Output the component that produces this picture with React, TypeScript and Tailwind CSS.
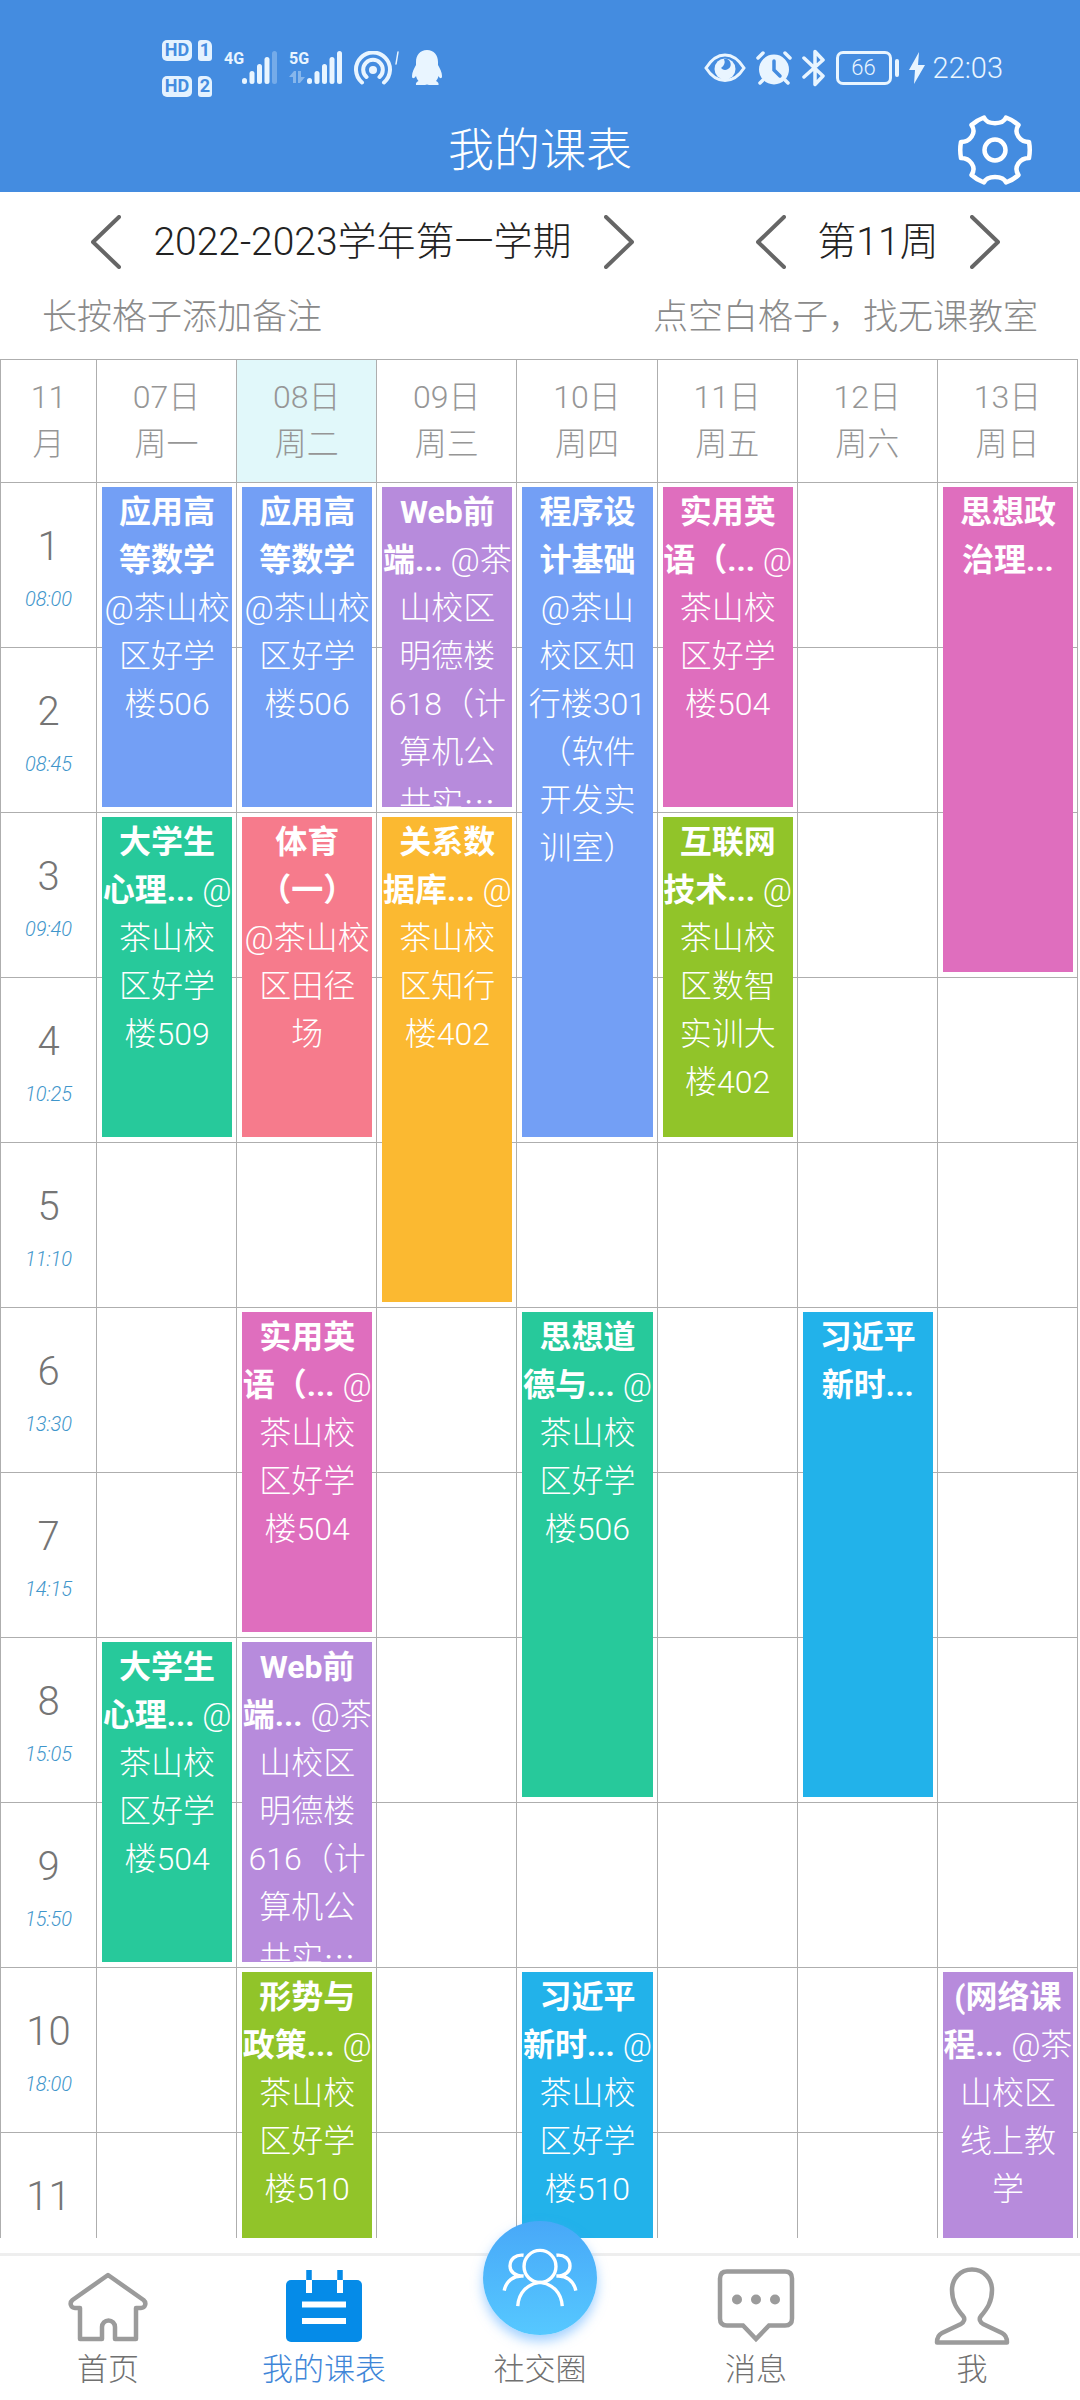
import React from "react";

type Course = { day: number; start: number; span: 2 | 3 | 4; color: string; title: string[]; mixed?: [string, string]; place: string[] };

const BLUE = "bg-[#739ff5]";
const GREEN = "bg-[#27c99b]";
const PURPLE = "bg-[#b78bdc]";
const PINK = "bg-[#df6ebe]";
const LIME = "bg-[#91c429]";
const CORAL = "bg-[#f67b8c]";
const AMBER = "bg-[#fbb931]";
const SKY = "bg-[#22b2ea]";

const SPAN_HEIGHT = { 2: "h-[320px]", 3: "h-[485px]", 4: "h-[650px]" };

const courses: Course[] = [
  { day: 0, start: 1, span: 2, color: BLUE, title: ["应用高", "等数学"], place: ["@茶山校", "区好学", "楼506"] },
  { day: 1, start: 1, span: 2, color: BLUE, title: ["应用高", "等数学"], place: ["@茶山校", "区好学", "楼506"] },
  { day: 2, start: 1, span: 2, color: PURPLE, title: ["Web前"], mixed: ["端...", "@茶"], place: ["山校区", "明德楼", "618（计", "算机公", "共实…"] },
  { day: 3, start: 1, span: 4, color: BLUE, title: ["程序设", "计基础"], place: ["@茶山", "校区知", "行楼301", "（软件", "开发实", "训室）"] },
  { day: 4, start: 1, span: 2, color: PINK, title: ["实用英"], mixed: ["语（...", "@"], place: ["茶山校", "区好学", "楼504"] },
  { day: 6, start: 1, span: 3, color: PINK, title: ["思想政", "治理..."], place: [] },
  { day: 0, start: 3, span: 2, color: GREEN, title: ["大学生"], mixed: ["心理...", "@"], place: ["茶山校", "区好学", "楼509"] },
  { day: 1, start: 3, span: 2, color: CORAL, title: ["体育", "（一）"], place: ["@茶山校", "区田径", "场"] },
  { day: 2, start: 3, span: 3, color: AMBER, title: ["关系数"], mixed: ["据库...", "@"], place: ["茶山校", "区知行", "楼402"] },
  { day: 4, start: 3, span: 2, color: LIME, title: ["互联网"], mixed: ["技术...", "@"], place: ["茶山校", "区数智", "实训大", "楼402"] },
  { day: 1, start: 6, span: 2, color: PINK, title: ["实用英"], mixed: ["语（...", "@"], place: ["茶山校", "区好学", "楼504"] },
  { day: 3, start: 6, span: 3, color: GREEN, title: ["思想道"], mixed: ["德与...", "@"], place: ["茶山校", "区好学", "楼506"] },
  { day: 5, start: 6, span: 3, color: SKY, title: ["习近平", "新时..."], place: [] },
  { day: 0, start: 8, span: 2, color: GREEN, title: ["大学生"], mixed: ["心理...", "@"], place: ["茶山校", "区好学", "楼504"] },
  { day: 1, start: 8, span: 2, color: PURPLE, title: ["Web前"], mixed: ["端...", "@茶"], place: ["山校区", "明德楼", "616（计", "算机公", "共实…"] },
  { day: 1, start: 10, span: 2, color: LIME, title: ["形势与"], mixed: ["政策...", "@"], place: ["茶山校", "区好学", "楼510"] },
  { day: 3, start: 10, span: 2, color: SKY, title: ["习近平"], mixed: ["新时...", "@"], place: ["茶山校", "区好学", "楼510"] },
  { day: 6, start: 10, span: 2, color: PURPLE, title: ["(网络课"], mixed: ["程...", "@茶"], place: ["山校区", "线上教", "学"] },
];

const days = [
  ["07日", "周一"],
  ["08日", "周二"],
  ["09日", "周三"],
  ["10日", "周四"],
  ["11日", "周五"],
  ["12日", "周六"],
  ["13日", "周日"],
];

const times = ["08:00", "08:45", "09:40", "10:25", "11:10", "13:30", "14:15", "15:05", "15:50", "18:00", ""];

function HdBadge({ sim }: { sim: string }) {
  return (
    <div className="flex gap-1.5">
      <span className="flex h-[21px] w-[30px] items-center justify-center rounded-[5px] bg-[#e4f2ff] text-lg font-bold leading-none text-[#448ce0]">HD</span>
      <span className="flex h-[21px] w-[14px] items-center justify-center rounded-[3px] rounded-tr-[6px] bg-[#e4f2ff] text-lg font-bold leading-none text-[#448ce0]">{sim}</span>
    </div>
  );
}

function Signal({ label, full }: { label: string; full?: boolean }) {
  return (
    <div className="flex h-[34px] items-start">
      <div className="w-[18px]">
        <div className="text-base font-bold leading-none">{label}</div>
        {full && (
          <svg width="16" height="13" viewBox="0 0 16 13" className="mt-1 opacity-40" fill="currentColor">
            <path d="M0 6 5 0h2v12H4V6zM9 0h3v6h4l-5 6H9z" />
          </svg>
        )}
      </div>
      <svg width="35" height="34" viewBox="0 0 35 34" fill="currentColor">
        <rect x="0" y="27" width="5" height="6" rx="2.5" />
        <rect x="7.5" y="20" width="5" height="13" rx="2.5" />
        <rect x="15" y="13" width="5" height="20" rx="2.5" />
        <rect x="22.5" y="6" width="5" height="27" rx="2.5" />
        <rect x="30" y="0" width="5" height="33" rx="2.5" opacity={full ? 1 : 0.3} />
      </svg>
    </div>
  );
}

function StatusBar() {
  return (
    <div className="flex h-[108px] items-center justify-between pl-[162px] pr-[77px] pt-7 text-[#e9f5ff]">
      <div className="flex items-center gap-3">
        <div className="flex flex-col gap-[15px]">
          <HdBadge sim="1" />
          <HdBadge sim="2" />
        </div>
        <Signal label="4G" />
        <Signal label="5G" full />
        <svg width="46" height="34" viewBox="0 0 46 34" fill="none" stroke="currentColor" strokeWidth="4" strokeLinecap="round">
          <path d="M8 31.500A17 17 0 1 1 30 31.500M12.500 26A9.800 9.800 0 1 1 25.500 26" />
          <circle cx="19" cy="19" r="4" fill="currentColor" stroke="none" />
          <path d="M44 1l-2 12" strokeWidth="1.500" />
        </svg>
        <svg width="30" height="36" viewBox="0 0 30 36" fill="currentColor">
          <path d="M15 0c7 0 11 5 11 12v3c2 4 4 7 4 11 0 3-2 3-3.500 0-.500 2-1.500 4-2.500 5 2 1 3 2 2.500 4H17q-2-1-4 0H4c-.500-2 .500-3 2.500-4-1-1-2-3-2.500-5C2 29 0 29 0 26c0-4 2-7 4-11v-3C4 5 8 0 15 0z" />
        </svg>
      </div>
      <div className="flex items-center gap-2.5">
        <svg width="42" height="30" viewBox="0 0 42 30">
          <path d="M2 15C7 7 14 2 21 2s14 5 19 13c-5 8-12 12.500-19 12.500S7 23 2 15z" fill="none" stroke="currentColor" strokeWidth="3" />
          <circle cx="21" cy="16" r="10.500" fill="currentColor" />
          <path d="M18 5a5.500 5.500 0 1 1-3 9 7 7 0 0 0 3-9z" fill="#448ce0" transform="translate(2 1)" />
        </svg>
        <svg width="36" height="34" viewBox="0 0 36 34" fill="none" stroke="currentColor" strokeWidth="3.500" strokeLinecap="round">
          <circle cx="18" cy="18.500" r="15" fill="currentColor" stroke="none" />
          <path d="M2 7l5-5M34 7l-5-5M7 29l-3 3M29 29l3 3" />
          <path d="M18 10v9l6 6" stroke="#448ce0" />
        </svg>
        <svg width="24" height="38" viewBox="0 0 24 38" fill="none" stroke="currentColor" strokeWidth="3.500" strokeLinecap="round" strokeLinejoin="round">
          <path d="M2 9l19 18-8 8.500V2.500L21 11 2 28" />
        </svg>
        <div className="flex items-center gap-[3px]">
          <span className="flex h-[34px] w-[56px] items-center justify-center rounded-[7px] border-[3px] border-current text-[22px] leading-none">66</span>
          <span className="h-[18px] w-[4px] rounded-sm bg-current" />
        </div>
        <div className="flex items-center gap-2">
          <svg width="16" height="32" viewBox="0 0 16 32" fill="currentColor">
            <path d="M10 0 0 18h6L5 32 16 13H9z" />
          </svg>
          <span className="text-[29px] leading-none">22:03</span>
        </div>
      </div>
    </div>
  );
}

function Gear() {
  return (
    <svg width="74" height="70" viewBox="0 0 74 70" fill="none" stroke="currentColor" strokeWidth="4.500" strokeLinejoin="round">
      <path d="M26 2.500 C29 10 45 10 48 2.500 Q55 5 60.500 10 C55 18 62 27 71 27 Q72.500 35 71 43 C62 43 55 52 60.500 60 Q55 65 48 67.500 C45 60 29 60 26 67.500 Q19 65 13.500 60 C19 52 12 43 3 43 Q1.500 35 3 27 C12 27 19 18 13.500 10 Q19 5 26 2.500Z" />
      <circle cx="37" cy="35" r="10.500" />
    </svg>
  );
}

function Arrow({ label, next }: { label: string; next?: boolean }) {
  return (
    <button type="button" aria-label={label} className="text-[#666666]">
      <svg width="30" height="54" viewBox="0 0 30 54" fill="none" stroke="currentColor" strokeWidth="4" strokeLinecap="round" strokeLinejoin="round">
        <path d={next ? "M2 2l26 25L2 52" : "M28 2L2 27l26 25"} />
      </svg>
    </button>
  );
}

function CourseCard({ course }: { course: Course }) {
  return (
    <button
      type="button"
      className={`absolute left-[5px] right-[4px] top-1 z-10 flex flex-col items-center overflow-hidden whitespace-nowrap pt-px text-[32px] leading-[48px] text-white ${SPAN_HEIGHT[course.span]} ${course.color}`}
    >
      {course.title.map((line) => (
        <span key={line} className="shrink-0 font-bold">{line}</span>
      ))}
      {course.mixed && (
        <span className="shrink-0">
          <b className="font-bold">{course.mixed[0]}</b> {course.mixed[1]}
        </span>
      )}
      {course.place.map((line) => (
        <span key={line} className={line.endsWith("…") ? "shrink-0 font-['Noto_Sans_CJK_SC',sans-serif]" : "shrink-0"}>{line}</span>
      ))}
    </button>
  );
}

function Timetable() {
  return (
    <table className="w-[calc(100%-2px)] table-fixed border-separate border-spacing-0 border-l border-t border-[#aeaeae]">
      <thead>
        <tr className="text-[32px] leading-[47px] text-[#969696]">
          <th scope="col" className="h-[123px] w-24 border-b border-r border-[#aeaeae] p-0 font-light">
            11<br />月
          </th>
          {days.map(([date, weekday], i) => (
            <th key={date} scope="col" className={`border-b border-r border-[#aeaeae] p-0 font-light ${i === 1 ? "bg-[#e1f8fa]" : ""}`}>
              {date}<br />{weekday}
            </th>
          ))}
        </tr>
      </thead>
      <tbody>
        {times.map((time, row) => (
          <tr key={row}>
            <th scope="row" className="h-[165px] border-b border-r border-[#aeaeae] px-0 pb-0 pt-9 align-top font-light">
              <div className="text-[40px] leading-[56px] text-[#757575]">{row + 1}</div>
              {time && <div className="mt-2 text-xl italic leading-8 text-[#3f96cb]">{time}</div>}
            </th>
            {days.map(([date], day) => {
              const course = courses.find((c) => c.day === day && c.start === row + 1);
              return (
                <td key={date} className="relative border-b border-r border-[#aeaeae] p-0">
                  {course && <CourseCard course={course} />}
                </td>
              );
            })}
          </tr>
        ))}
      </tbody>
    </table>
  );
}

function NavItem({ label, active, children }: { label: string; active?: boolean; children: React.ReactNode }) {
  return (
    <a href="#" aria-current={active ? "page" : undefined} className={`relative flex flex-1 flex-col items-center gap-1 pb-2.5 pt-2.5 ${active ? "text-[#3f86d8]" : "text-[#707070]"}`}>
      <span className="flex h-20 w-20 items-center justify-center">{children}</span>
      <span className="text-[31px] leading-10">{label}</span>
    </a>
  );
}

function BottomNav() {
  return (
    <nav className="z-20 mt-[15px] flex border-t-[3px] border-[#eeeeee] bg-white">
      <NavItem label="首页">
        <svg width="80" height="80" viewBox="0 0 80 80" fill="none" stroke="#9b9b9b" strokeWidth="4.500" strokeLinejoin="round">
          <path d="M40 9 4.500 34c-3.500 3-1.500 8 2.500 8h5v31h22V61a6.500 6.500 0 0 1 13 0v12h21V42h5c4 0 6-5 2.500-8z" />
        </svg>
      </NavItem>
      <NavItem label="我的课表" active>
        <svg width="80" height="80" viewBox="0 0 80 80">
          <rect x="2" y="14" width="76" height="62" rx="5" fill="#058be8" />
          <path d="M25 4v10M56 4v10" stroke="#058be8" strokeWidth="5.500" />
          <path d="M25 14v13M56 14v13M18 38.500h44M18 55h44" stroke="#fff" strokeWidth="6" />
        </svg>
      </NavItem>
      <NavItem label="社交圈">
        <span className="absolute -top-[35px] left-1/2 flex h-[114px] w-[114px] -translate-x-1/2 items-center justify-center rounded-full bg-linear-to-b from-[#48a8f8] to-[#56c8ff] shadow-[0_6px_12px_rgba(86,170,255,0.55)]">
          <svg width="76" height="60" viewBox="0 0 78 62" fill="none" stroke="#fff" strokeWidth="3.500">
            <circle cx="39" cy="19" r="16.500" />
            <path d="M16 60c1-14 10-23 23-24.500C52 37 61 46 62 60" />
            <path d="M22 7.500c-8-1-14 4-14 11 0 6 5 10.500 14 10.500-10-1-18 5-20 15M56 7.500c8-1 14 4 14 11 0 6-5 10.500-14 10.500 10-1 18 5 20 15" />
          </svg>
        </span>
      </NavItem>
      <NavItem label="消息">
        <svg width="80" height="80" viewBox="0 0 80 80" fill="none" stroke="#9b9b9b" strokeWidth="4.500">
          <path d="M11 5.500h58q7 0 7 7v40q0 7-7 7H53L40 73 27 59.500H11q-7 0-7-7v-40q0-7 7-7z" />
          <g fill="#9b9b9b" stroke="none">
            <circle cx="21" cy="33.500" r="5" />
            <circle cx="40" cy="33.500" r="5" />
            <circle cx="59" cy="33.500" r="5" />
          </g>
        </svg>
      </NavItem>
      <NavItem label="我">
        <svg width="80" height="80" viewBox="0 0 80 80" fill="none" stroke="#9b9b9b" strokeWidth="4.500" strokeLinejoin="round">
          <path d="M40 3.500C28 3.500 20 13 20 24c0 12 5 19 11 26 2.500 3 1 6-2 8L10 67c-4 2-5 5-5 9.500h70c0-4.500-1-7.500-5-9.500l-19-9c-3-2-4.500-5-2-8 6-7 11-14 11-26 0-11-8-20.500-20-20.500z" />
        </svg>
      </NavItem>
    </nav>
  );
}

export default function App() {
  return (
    <div className="flex h-screen flex-col overflow-hidden bg-white font-['Roboto','Noto_Sans_CJK_SC',sans-serif] font-light">
      <header className="bg-[#448ce0] text-white">
        <StatusBar />
        <div className="grid h-[84px] grid-cols-[1fr_auto_1fr] items-center">
          <h1 className="col-start-2 text-[46px] leading-none">我的课表</h1>
          <button type="button" aria-label="设置" className="mr-12 justify-self-end">
            <Gear />
          </button>
        </div>
      </header>
      <div className="flex h-[100px] items-center justify-between pl-[91px] pr-20 text-[39px] text-[#222222]">
        <div className="flex w-[543px] items-center justify-between">
          <Arrow label="上一学期" />
          <span>2022-2023学年第一学期</span>
          <Arrow label="下一学期" next />
        </div>
        <div className="flex w-[244px] items-center justify-between">
          <Arrow label="上一周" />
          <span>第11周</span>
          <Arrow label="下一周" next />
        </div>
      </div>
      <div className="mb-[15px] flex h-[52px] items-center justify-between px-[42px] text-[35px] text-[#8a8a8a]">
        <span>长按格子添加备注</span>
        <span>点空白格子，找无课教室</span>
      </div>
      <main className="min-h-0 flex-1 overflow-hidden">
        <Timetable />
      </main>
      <BottomNav />
    </div>
  );
}
